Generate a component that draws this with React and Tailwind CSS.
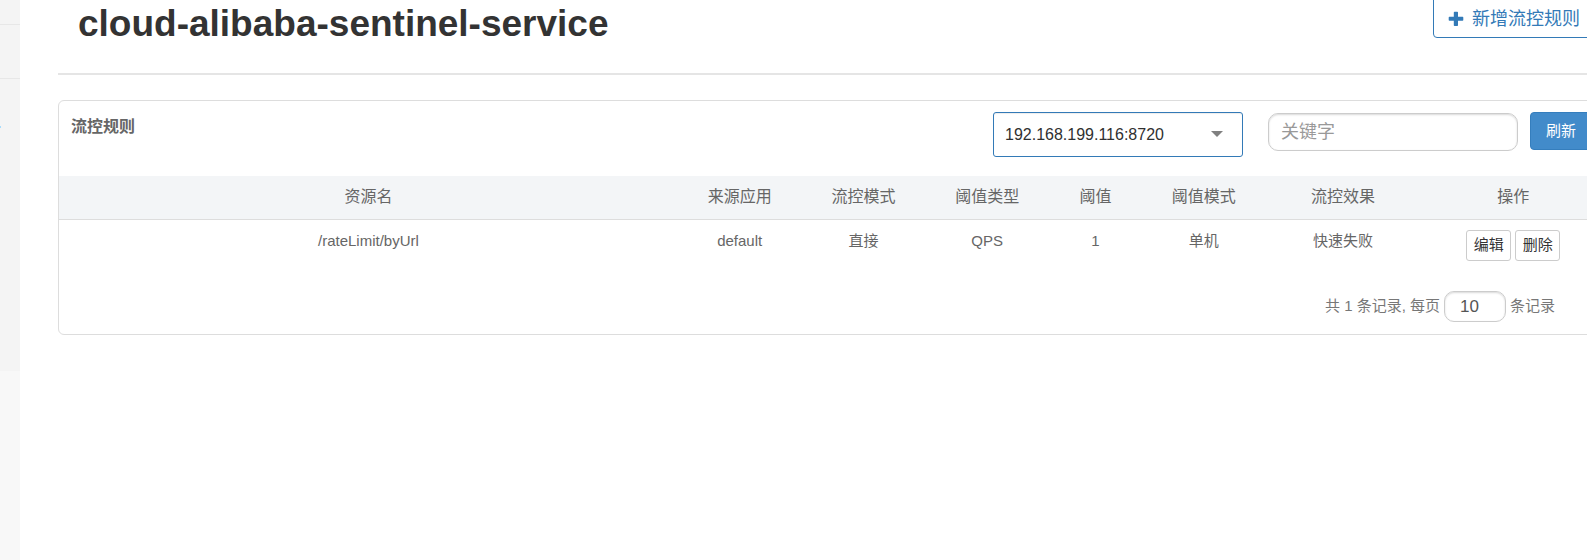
import React from 'react';

const columns = [
  { label: '资源名', width: 'w-[40%]' },
  { label: '来源应用', width: 'w-[8%]' },
  { label: '流控模式', width: 'w-[8%]' },
  { label: '阈值类型', width: 'w-[8%]' },
  { label: '阈值', width: 'w-[6%]' },
  { label: '阈值模式', width: 'w-[8%]' },
  { label: '流控效果', width: 'w-[10%]' },
  { label: '操作', width: 'w-[12%]' },
];

const rules = [['/rateLimit/byUrl', 'default', '直接', 'QPS', '1', '单机', '快速失败']];

function Sidebar() {
  return (
    <aside className="w-5 shrink-0 overflow-hidden bg-[#f8f8f8]">
      <div className="h-[25px] border-b border-[#e7e7e7] bg-[#f4f4f4]" />
      <div className="h-[54px] border-b border-[#e7e7e7] bg-[#f4f4f4]" />
      <div className="h-[292px] bg-[#f4f4f4] pt-[47px]">
        <div className="h-[2px] w-px bg-[#a9dcfb]" />
      </div>
    </aside>
  );
}

function PageHeader() {
  return (
    <header className="flex h-[75px] items-start justify-between border-b-2 border-[#e5e5e5] pl-5 pr-[14px]">
      <h1 className="text-[37px] font-bold leading-[48px] text-[#333]">cloud-alibaba-sentinel-service</h1>
      <button
        type="button"
        className="-mt-1 flex h-[42px] items-center gap-2 rounded border border-[#337ab7] bg-white pl-[14px] pr-3 pt-1 text-[18px] text-[#337ab7]"
      >
        <svg className="size-4" viewBox="0 0 16 16" fill="currentColor" aria-hidden="true">
          <path d="M6.500 .7h2.800q.7 0 .7.7V5.700h4.600q.7 0 .7.7v2.600q0 .7-.7.7H10v4.600q0 .7-.7.7H6.500q-.7 0-.7-.7V9.700H1.400q-.7 0-.7-.7V6.400q0-.7.7-.7h4.400V1.400q0-.7.7-.7z" />
        </svg>
        新增流控规则
      </button>
    </header>
  );
}

function Toolbar() {
  return (
    <div className="flex h-[75px] items-start justify-between pl-3 pr-[14px]">
      <h2 className="pt-[13px] text-[16px] font-bold leading-[26px]">流控规则</h2>
      <div className="flex items-start pt-[11px]">
        <div className="relative mr-[25px]">
          <select
            aria-label="机器"
            className="h-[45px] w-[250px] appearance-none rounded-[3px] border border-[#337ab7] bg-white pl-[11px] text-[16px] text-[#303030] shadow-[inset_0_1px_1px_rgba(0,0,0,0.075)]"
          >
            <option>192.168.199.116:8720</option>
          </select>
          <svg
            className="pointer-events-none absolute right-5 top-[19px] h-[6px] w-3"
            viewBox="0 0 12 6"
            fill="#808080"
            aria-hidden="true"
          >
            <path d="M0 0h12L6 6z" />
          </svg>
        </div>
        <input
          type="text"
          aria-label="关键字"
          placeholder="关键字"
          className="mr-3 mt-px h-[38px] w-[250px] rounded-[10px] border border-[#ccc] px-3 text-[18px] shadow-[inset_0_1px_2px_rgba(0,0,0,0.15)] placeholder:text-[#999]"
        />
        <button
          type="button"
          className="h-[38px] rounded border border-[#357ebd] bg-[#428bca] px-[15px] text-[15px] text-white"
        >
          刷新
        </button>
      </div>
    </div>
  );
}

function ActionButton({ children }) {
  return (
    <button
      type="button"
      className="h-[31px] w-[45px] rounded-[3px] border border-[#ccc] bg-white text-[15px] leading-[22px] text-[#333]"
    >
      {children}
    </button>
  );
}

function RulesTable() {
  return (
    <table className="w-full table-fixed border-collapse text-center">
      <thead>
        <tr className="h-[43px] border-b border-[#ddd] bg-[#f3f5f7]">
          {columns.map((column) => (
            <th key={column.label} scope="col" className={`${column.width} text-[16px] font-normal`}>
              {column.label}
            </th>
          ))}
        </tr>
      </thead>
      <tbody>
        {rules.map((cells) => (
          <tr key={cells[0]} className="h-[52px] align-top">
            {cells.map((cell, index) => (
              <td key={index} className="pt-[10px] text-[15px] leading-[22px]">
                {cell}
              </td>
            ))}
            <td className="pt-[10px]">
              <div className="flex justify-center gap-1">
                <ActionButton>编辑</ActionButton>
                <ActionButton>删除</ActionButton>
              </div>
            </td>
          </tr>
        ))}
      </tbody>
    </table>
  );
}

function Pagination() {
  return (
    <div className="flex items-center justify-end gap-1 pb-3 pr-[51px] pt-5 text-[15px] text-[#777]">
      <span>共 1 条记录,</span>
      <label htmlFor="page-size">每页</label>
      <input
        id="page-size"
        type="text"
        defaultValue="10"
        className="h-[31px] w-[62px] rounded-[10px] border border-[#ccc] px-[15px] text-[17px] text-[#555] shadow-[inset_0_1px_2px_rgba(0,0,0,0.15)]"
      />
      <span>条记录</span>
    </div>
  );
}

export default function App() {
  return (
    <div className="flex min-h-screen overflow-hidden bg-white font-['Liberation_Sans','Noto_Sans_CJK_SC',sans-serif] text-[#666]">
      <Sidebar />
      <main className="-mr-5 min-w-0 flex-1 pl-[38px]">
        <PageHeader />
        <section className="mt-[25px] rounded-md border border-[#ddd]">
          <Toolbar />
          <RulesTable />
          <Pagination />
        </section>
      </main>
    </div>
  );
}
